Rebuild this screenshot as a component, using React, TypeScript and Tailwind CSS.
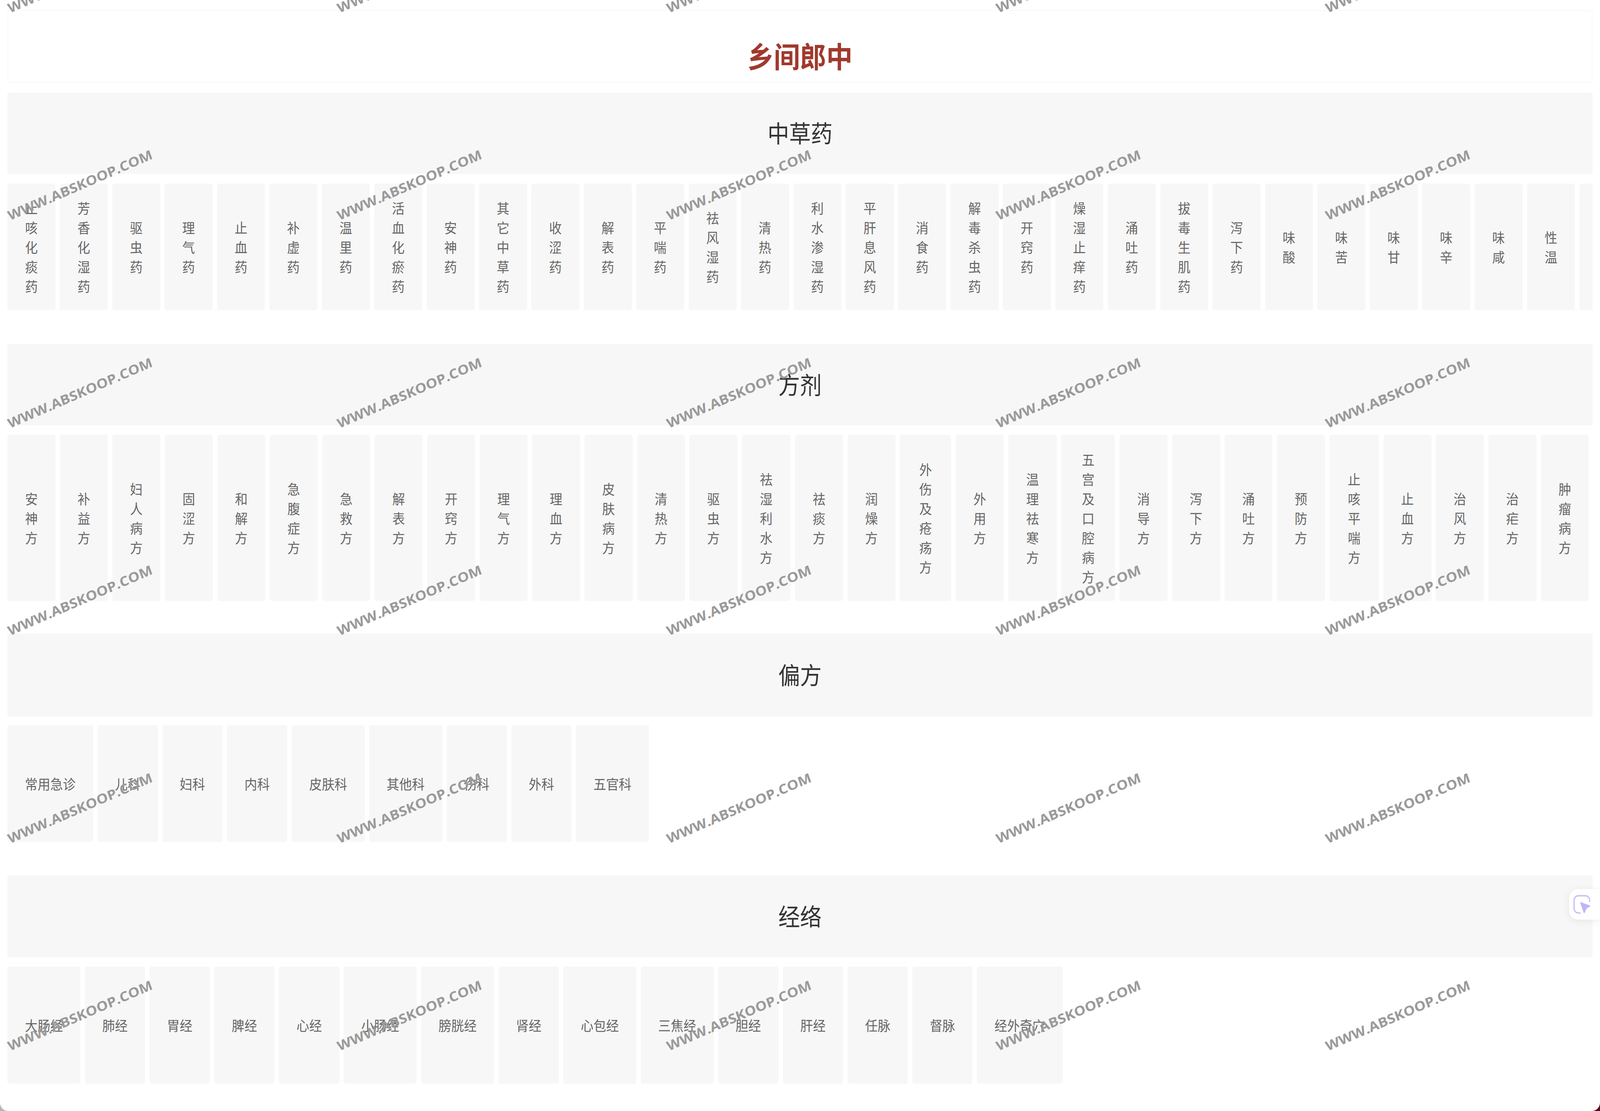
import React from 'react';

const herbs = [
  '止咳化痰药', '芳香化湿药', '驱虫药', '理气药', '止血药', '补虚药', '温里药', '活血化瘀药',
  '安神药', '其它中草药', '收涩药', '解表药', '平喘药', '祛风湿药', '清热药', '利水渗湿药',
  '平肝息风药', '消食药', '解毒杀虫药', '开窍药', '燥湿止痒药', '涌吐药', '拔毒生肌药', '泻下药',
  '味酸', '味苦', '味甘', '味辛', '味咸', '性温', '性寒',
];

const formulas: [string, string][] = [
  ['安神方', 'w-[134.7px]'], ['补益方', 'w-[134.7px]'], ['妇人病方', 'w-[134.7px]'], ['固涩方', 'w-[134.7px]'],
  ['和解方', 'w-[134.7px]'], ['急腹症方', 'w-[134.7px]'], ['急救方', 'w-[134.7px]'], ['解表方', 'w-[134.7px]'],
  ['开窍方', 'w-[134.7px]'], ['理气方', 'w-[134.7px]'], ['理血方', 'w-[134.7px]'], ['皮肤病方', 'w-[134.7px]'],
  ['清热方', 'w-[134.7px]'], ['驱虫方', 'w-[134.7px]'], ['祛湿利水方', 'w-[136.5px]'], ['祛痰方', 'w-[134.7px]'],
  ['润燥方', 'w-[134.7px]'], ['外伤及疮疡方', 'w-[144px]'], ['外用方', 'w-[134.7px]'], ['温理祛寒方', 'w-[136.5px]'],
  ['五宫及口腔病方', 'w-[151px]'], ['消导方', 'w-[134.7px]'], ['泻下方', 'w-[134.7px]'], ['涌吐方', 'w-[134.7px]'],
  ['预防方', 'w-[134.7px]'], ['止咳平喘方', 'w-[139px]'], ['止血方', 'w-[134.7px]'], ['治风方', 'w-[134.7px]'],
  ['治疟方', 'w-[134.7px]'], ['肿瘤病方', 'w-[134.7px]'],
];

const folk = ['常用急诊', '儿科', '妇科', '内科', '皮肤科', '其他科', '伤科', '外科', '五官科'];

const meridians = [
  '大肠经', '肺经', '胃经', '脾经', '心经', '小肠经', '膀胱经', '肾经', '心包经', '三焦经',
  '胆经', '肝经', '任脉', '督脉', '经外奇穴',
];

const cardClass =
  'flex items-center justify-center shrink-0 rounded-[6px] bg-[#f7f7f7] text-center text-[35.7px] leading-[50px] text-[#666] shadow-[0_2px_4px_rgba(0,0,0,0.012)]';

function SectionHeader({ title, className }: { title: string; className: string }) {
  return (
    <div
      className={`flex items-center justify-center rounded-[4px] bg-[#f7f7f7] pb-[6px] text-[61px] leading-none text-[#333] shadow-[0_-2px_3px_rgba(0,0,0,0.01)] ${className}`}
    >
      {title}
    </div>
  );
}

function CursorBadge() {
  return (
    <div className="absolute right-0 top-[2276px] flex h-[78px] w-[87px] items-center rounded-l-[24px] bg-white pl-[12px] shadow-[0_4px_22px_rgba(0,0,0,0.07)]">
      <svg width="48" height="48" viewBox="0 0 48 48" fill="none">
        <path
          d="M46 17V14A12 12 0 0 0 34 2H14A12 12 0 0 0 2 14V34A12 12 0 0 0 14 46H19"
          stroke="#c6c0f6"
          strokeWidth="3.5"
          strokeLinecap="round"
        />
        <path
          d="M21 20L46 28.5L36 33.5L30.5 45Z"
          fill="#bdb6f5"
          stroke="#bdb6f5"
          strokeWidth="3"
          strokeLinejoin="round"
        />
      </svg>
    </div>
  );
}

function Watermarks() {
  const tiles = Array.from({ length: 30 });
  return (
    <div className="pointer-events-none absolute left-[-238.5px] top-[-324.25px] grid grid-cols-[repeat(5,927px)] auto-rows-[531.5px] place-items-center">
      {tiles.map((_, i) => (
        <span
          key={i}
          className="whitespace-nowrap font-['Open_Sans',sans-serif] text-[34px] font-bold leading-none text-[#9a9a9a] -rotate-[21.5deg] scale-x-[1.2]"
        >
          WWW.ABSKOOP.COM
        </span>
      ))}
    </div>
  );
}

export default function App() {
  // the window can open narrower than the 4502px this page is measured for,
  // so squeeze the width to whatever we actually got (1 at full size)
  const fit = document.documentElement.clientWidth / 4502;

  return (
    <div className="h-[2844px] w-full overflow-hidden">
      <div
        className="h-[2844px] w-[4502px] bg-gradient-to-r from-[#b5b5b5] from-10% to-[#5a0a18] to-90%"
        style={{ transform: `scaleX(${fit})`, transformOrigin: 'left top' }}
      >
        <div className="relative h-full overflow-hidden rounded-b-[22px] bg-white px-[21px] pt-[26px] font-['Noto_Sans_CJK_SC',sans-serif]">
          <div className="flex h-[185px] items-center justify-center rounded-[8px] border-2 border-[#f8f8f8] pt-[44px] text-[74px] font-bold leading-none text-[#a0392e]">
            乡间郎中
          </div>

          <SectionHeader title="中草药" className="mt-[27px] h-[207px]" />
          <div className="mt-[25px] flex gap-[12.75px] overflow-hidden">
            {herbs.map((name) => (
              <div key={name} className={`${cardClass} h-[324px] w-[134.7px] px-[49px]`}>
                {name}
              </div>
            ))}
          </div>

          <SectionHeader title="方剂" className="mt-[87px] h-[208px]" />
          <div className="mt-[24px] flex gap-[12.95px]">
            {formulas.map(([name, width]) => (
              <div key={name} className={`${cardClass} h-[425px] px-[49px] ${width}`}>
                {name}
              </div>
            ))}
          </div>

          <SectionHeader title="偏方" className="mt-[84px] h-[212px]" />
          <div className="mt-[22px] flex gap-[12.75px]">
            {folk.map((name) => (
              <div key={name} className={`${cardClass} h-[299px] whitespace-nowrap px-[49px]`}>
                {name}
              </div>
            ))}
          </div>

          <SectionHeader title="经络" className="mt-[86px] h-[210px]" />
          <div className="mt-[23px] flex gap-[12.75px]">
            {meridians.map((name) => (
              <div key={name} className={`${cardClass} h-[300px] whitespace-nowrap px-[49px]`}>
                {name}
              </div>
            ))}
          </div>

          <CursorBadge />
          <Watermarks />
        </div>
      </div>
    </div>
  );
}
